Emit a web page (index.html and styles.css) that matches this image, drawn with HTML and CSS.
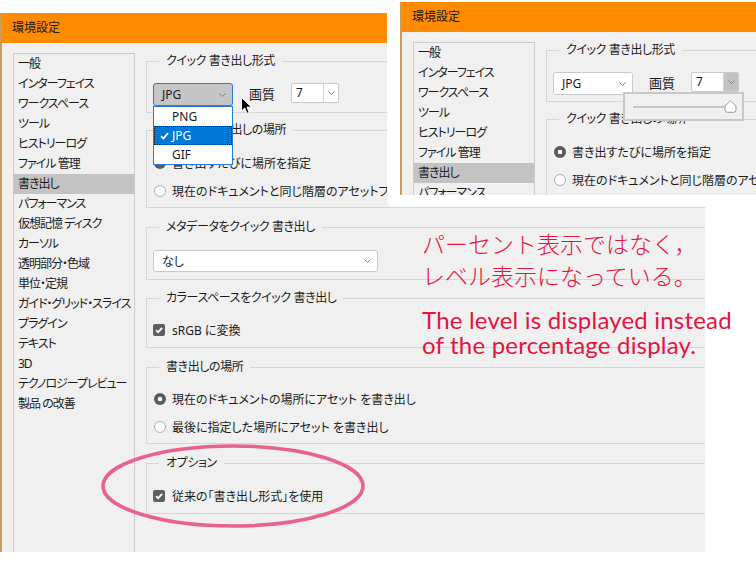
FILE: index.html
```html
<!DOCTYPE html>
<html lang="ja">
<head>
    <meta charset="UTF-8">
    <meta name="viewport" content="width=device-width, initial-scale=1.0">
    <title>環境設定 - 書き出し</title>
    <link rel="stylesheet" href="styles.css">
</head>
<body>
<div class="page">

    <!-- main dialog: JPG dropdown open -->
    <div class="dialog dialog-main">
        <div class="titlebar">環境設定</div>
        <div class="dialog-body">
            <ul class="nav">
                <li>一般</li>
                <li>インターフェイス</li>
                <li>ワークスペース</li>
                <li>ツール</li>
                <li>ヒストリーログ</li>
                <li>ファイル 管理</li>
                <li class="selected">書き出し</li>
                <li>パフォーマンス</li>
                <li>仮想記憶 ディスク</li>
                <li>カーソル</li>
                <li>透明部分・色域</li>
                <li>単位・定規</li>
                <li>ガイド・グリッド・スライス</li>
                <li>プラグイン</li>
                <li>テキスト</li>
                <li>3D</li>
                <li>テクノロジープレビュー</li>
                <li>製品 の改善</li>
            </ul>
            <div class="panel">
                <div class="group group-format">
                    <div class="group-title">クイック 書き出し形式</div>
                    <div class="format-row">
                        <div class="select select-format is-open">
                            <span>JPG</span>
                            <svg class="chev" width="7" height="4" viewBox="0 0 7 4"><path d="M0.5 0.5 L3.5 3.5 L6.5 0.5"/></svg>
                        </div>
                        <span class="quality-label">画質</span>
                        <div class="spin">
                            <span class="spin-value">7</span>
                            <span class="spin-arrow"><svg class="chev" width="7" height="4" viewBox="0 0 7 4"><path d="M0.5 0.5 L3.5 3.5 L6.5 0.5"/></svg></span>
                        </div>
                    </div>
                </div>
                <div class="group group-location">
                    <div class="group-title">クイック 書き出しの場所</div>
                    <div class="options">
                        <div class="option"><span class="radio checked"></span>書き出すたびに場所を指定</div>
                        <div class="option"><span class="radio"></span>現在のドキュメントと同じ階層のアセットフォルダーに書き出し</div>
                    </div>
                </div>
                <div class="group group-meta">
                    <div class="group-title">メタデータをクイック 書き出し</div>
                    <div class="select select-meta">
                        <span>なし</span>
                        <svg class="chev" width="7" height="4" viewBox="0 0 7 4"><path d="M0.5 0.5 L3.5 3.5 L6.5 0.5"/></svg>
                    </div>
                </div>
                <div class="group group-color">
                    <div class="group-title">カラースペースをクイック 書き出し</div>
                    <div class="option single">
                        <span class="check"><svg width="12" height="12" viewBox="0 0 12 12"><path d="M3 6.2 L5.1 8.2 L9.2 3.9"/></svg></span>sRGB に変換
                    </div>
                </div>
                <div class="group group-dest">
                    <div class="group-title">書き出しの場所</div>
                    <div class="options">
                        <div class="option"><span class="radio checked"></span>現在のドキュメントの場所にアセット を書き出し</div>
                        <div class="option"><span class="radio"></span>最後に指定した場所にアセット を書き出し</div>
                    </div>
                </div>
                <div class="group group-option">
                    <div class="group-title">オプション</div>
                    <div class="option single">
                        <span class="check"><svg width="12" height="12" viewBox="0 0 12 12"><path d="M3 6.2 L5.1 8.2 L9.2 3.9"/></svg></span>従来の「書き出し形式」を使用
                    </div>
                </div>
            </div>
        </div>

        <ul class="dropdown">
            <li>PNG</li>
            <li class="active"><svg class="tick" width="9" height="8" viewBox="0 0 9 8"><path d="M1 4.2 L3.4 6.5 L8 1.2"/></svg>JPG</li>
            <li>GIF</li>
        </ul>

        <svg class="cursor" width="12" height="18" viewBox="0 0 12 18">
            <path d="M0.5 0.5 L0.5 14 L3.7 11 L6 16.4 L8.2 15.4 L6 10.2 L10.5 10.2 Z"/>
        </svg>
    </div>

    <!-- inset screenshot: quality slider open -->
    <div class="inset">
        <div class="dialog dialog-inset">
            <div class="titlebar">環境設定</div>
            <div class="dialog-body">
                <ul class="nav">
                    <li>一般</li>
                    <li>インターフェイス</li>
                    <li>ワークスペース</li>
                    <li>ツール</li>
                    <li>ヒストリーログ</li>
                    <li>ファイル 管理</li>
                    <li class="selected">書き出し</li>
                    <li>パフォーマンス</li>
                </ul>
                <div class="panel">
                    <div class="group group-format">
                        <div class="group-title">クイック 書き出し形式</div>
                        <div class="format-row">
                            <div class="select select-format">
                                <span>JPG</span>
                                <svg class="chev" width="7" height="4" viewBox="0 0 7 4"><path d="M0.5 0.5 L3.5 3.5 L6.5 0.5"/></svg>
                            </div>
                            <span class="quality-label">画質</span>
                            <div class="spin is-hover">
                                <span class="spin-value">7</span>
                                <span class="spin-arrow"><svg class="chev" width="7" height="4" viewBox="0 0 7 4"><path d="M0.5 0.5 L3.5 3.5 L6.5 0.5"/></svg></span>
                            </div>
                        </div>
                    </div>
                    <div class="group group-location">
                        <div class="group-title">クイック 書き出しの場所</div>
                        <div class="options">
                            <div class="option"><span class="radio checked"></span>書き出すたびに場所を指定</div>
                            <div class="option"><span class="radio"></span>現在のドキュメントと同じ階層のアセットフォルダーに書き出し</div>
                        </div>
                    </div>
                </div>
            </div>

            <div class="slider-pop">
                <div class="slider-track"></div>
                <svg class="slider-thumb" width="13" height="13" viewBox="0 0 13 13">
                    <path d="M6.5 0.8 L12 6 L12 10 Q12 12.3 9.7 12.3 L3.3 12.3 Q1 12.3 1 10 L1 6 Z"/>
                </svg>
            </div>
        </div>
    </div>

    <svg class="ring" width="268" height="90" viewBox="0 0 268 90">
        <ellipse cx="133" cy="43" rx="130" ry="40"/>
    </svg>

    <div class="note">
        <div class="note-ja">パーセント表示ではなく，<br>レベル表示になっている。</div>
        <div class="note-en">The level is displayed instead<br>of the percentage display.</div>
    </div>
</div>
</body>
</html>
```

FILE: styles.css
```css
body {
    margin: 0;
    background: #fff;
    font-family: "Noto Sans", "Noto Sans CJK JP", sans-serif;
    color: #1a1a1a;
}

.page {
    position: relative;
    width: 756px;
    height: 567px;
    padding-top: 13px;
    box-sizing: border-box;
    overflow: hidden;
}

/* dialog chrome */
.dialog {
    position: relative;
    box-sizing: border-box;
    border-left: 2px solid #c99d5c;
    background: #f0f0f0;
    overflow: hidden;
    font-size: 12px;
    font-feature-settings: "palt";
}

.dialog-main {
    width: 705px;
    height: 539px;
}

.titlebar {
    height: 30px;
    line-height: 30px;
    padding-left: 10px;
    background: #ff8c00;
}

.dialog-body {
    display: flex;
    height: 509px;
    padding: 10px 0 0 11px;
    box-sizing: border-box;
}

.nav {
    list-style: none;
    margin: 0;
    padding: 0;
    width: 122px;
    flex-shrink: 0;
    box-sizing: border-box;
    border: 1px solid #cdcdcd;
    border-bottom: none;
}

.nav li {
    height: 20px;
    line-height: 20px;
    padding-left: 4px;
    white-space: nowrap;
    letter-spacing: -1px;
}

.nav li.selected {
    background: #c3c3c3;
}

.panel {
    flex: 1;
    min-width: 0;
    padding: 8px 0 0 11px;
}

/* group boxes */
.group {
    width: 640px;
    box-sizing: border-box;
    border: 1px solid #d6d6d6;
    padding: 0 6px;
}

.group-title {
    display: table;
    margin: -9px 0 0 6px;
    padding: 0 7px;
    line-height: 16px;
    letter-spacing: -0.4px;
    background: #f0f0f0;
}

.group-format   { height: 52px; }
.group-location { height: 78px; margin-top: 17px; }
.group-meta     { height: 53px; margin-top: 19px; }
.group-color    { height: 50px; margin-top: 18px; }
.group-dest     { height: 77px; margin-top: 19px; }
.group-option   { height: 51px; margin-top: 19px; }

.format-row {
    display: flex;
    align-items: flex-start;
    margin-top: 14px;
}

.group-location .options { margin-top: 11px; }
.group-dest .options { margin-top: 10px; }
.group-color .option { margin-top: 14px; }
.group-option .option { margin-top: 15px; }

.option {
    display: flex;
    align-items: center;
    height: 28px;
    white-space: nowrap;
}

.option.single {
    height: 20px;
}

.radio {
    width: 12px;
    height: 12px;
    flex-shrink: 0;
    box-sizing: border-box;
    margin: 0 6px 0 1px;
    border: 1px solid #adadad;
    border-radius: 50%;
    background: #fff;
}

.radio.checked {
    border: none;
    background: radial-gradient(circle, #fff 0 2px, #5b5b5b 2.6px);
}

.check {
    display: flex;
    align-items: center;
    justify-content: center;
    width: 12px;
    height: 12px;
    margin-right: 7px;
    border-radius: 2px;
    background: #5f5f5f;
}

.check path {
    fill: none;
    stroke: #fff;
    stroke-width: 1.7;
}

/* selects */
.select {
    display: flex;
    align-items: center;
    justify-content: space-between;
    height: 22px;
    box-sizing: border-box;
    padding: 0 6px 0 8px;
    border: 1px solid #c9c9c9;
    border-radius: 3px;
    background: #fff;
}

.select-format {
    width: 80px;
    height: 23px;
}

.select-format.is-open {
    background: #c6c6c6;
    border-color: #2c7ad6;
}

.select-meta {
    width: 225px;
    margin-top: 15px;
}

.chev path {
    fill: none;
    stroke: #7d7d7d;
    stroke-width: 1;
}

.quality-label {
    margin-left: 16px;
    font-size: 13px;
    line-height: 22px;
}

.spin {
    display: flex;
    height: 20px;
    margin-left: 16px;
    box-sizing: border-box;
    border: 1px solid #cacaca;
    border-radius: 2px;
    background: #fff;
}

.spin-value {
    width: 31px;
    padding-left: 4px;
    box-sizing: border-box;
    line-height: 18px;
}

.spin-arrow {
    display: flex;
    align-items: center;
    justify-content: center;
    width: 14px;
    border-left: 1px solid #d4d4d4;
}

.spin.is-hover .spin-arrow {
    background: #c3c3c3;
}

/* open dropdown list */
.dropdown {
    position: absolute;
    left: 151px;
    top: 93px;
    width: 80px;
    margin: 0;
    padding: 0;
    list-style: none;
    box-sizing: border-box;
    background: #fff;
    border: 1px solid #2c7ad6;
}

.dropdown li {
    display: flex;
    align-items: center;
    height: 19px;
    padding-left: 18px;
}

.dropdown li.active {
    background: #0078d7;
    color: #fff;
    outline: 1px dotted #1a1a1a;
    outline-offset: -1px;
}

.tick {
    margin: 0 3px 0 -12px;
}

.tick path {
    fill: none;
    stroke: #fff;
    stroke-width: 1.8;
}

.cursor {
    position: absolute;
    left: 239px;
    top: 84px;
}

.cursor path {
    fill: #000;
    stroke: #fff;
    stroke-width: 1;
}

/* inset screenshot */
.inset {
    position: absolute;
    left: 387px;
    top: 0;
    width: 369px;
    height: 207px;
    box-sizing: border-box;
    padding: 2px 0 0 13px;
    background: #fff;
    border-bottom-left-radius: 6px;
}

.dialog-inset {
    width: 356px;
    height: 193px;
}

.slider-pop {
    position: absolute;
    left: 221px;
    top: 90px;
    width: 121px;
    height: 29px;
    box-sizing: border-box;
    display: flex;
    align-items: center;
    padding-left: 8px;
    border: 2px solid #c8c8c8;
    background: #f0f0f0;
}

.slider-track {
    width: 91px;
    height: 2px;
    background: #c4c4c4;
}

.slider-thumb path {
    fill: #fff;
    stroke: #9a9a9a;
    stroke-width: 1;
}

/* annotations */
.ring {
    position: absolute;
    left: 100px;
    top: 443px;
}

.ring ellipse {
    fill: none;
    stroke: #e8628a;
    stroke-width: 3.5;
}

.note {
    position: absolute;
    left: 422px;
    top: 227px;
    color: #e3153f;
    white-space: nowrap;
}

.note-ja {
    font-family: "Noto Sans CJK JP", sans-serif;
    font-size: 23px;
    font-weight: 300;
    line-height: 32px;
}

.note-en {
    margin-top: 16px;
    font-family: Lato, sans-serif;
    font-size: 24px;
    letter-spacing: 0.2px;
    line-height: 25px;
}
```
